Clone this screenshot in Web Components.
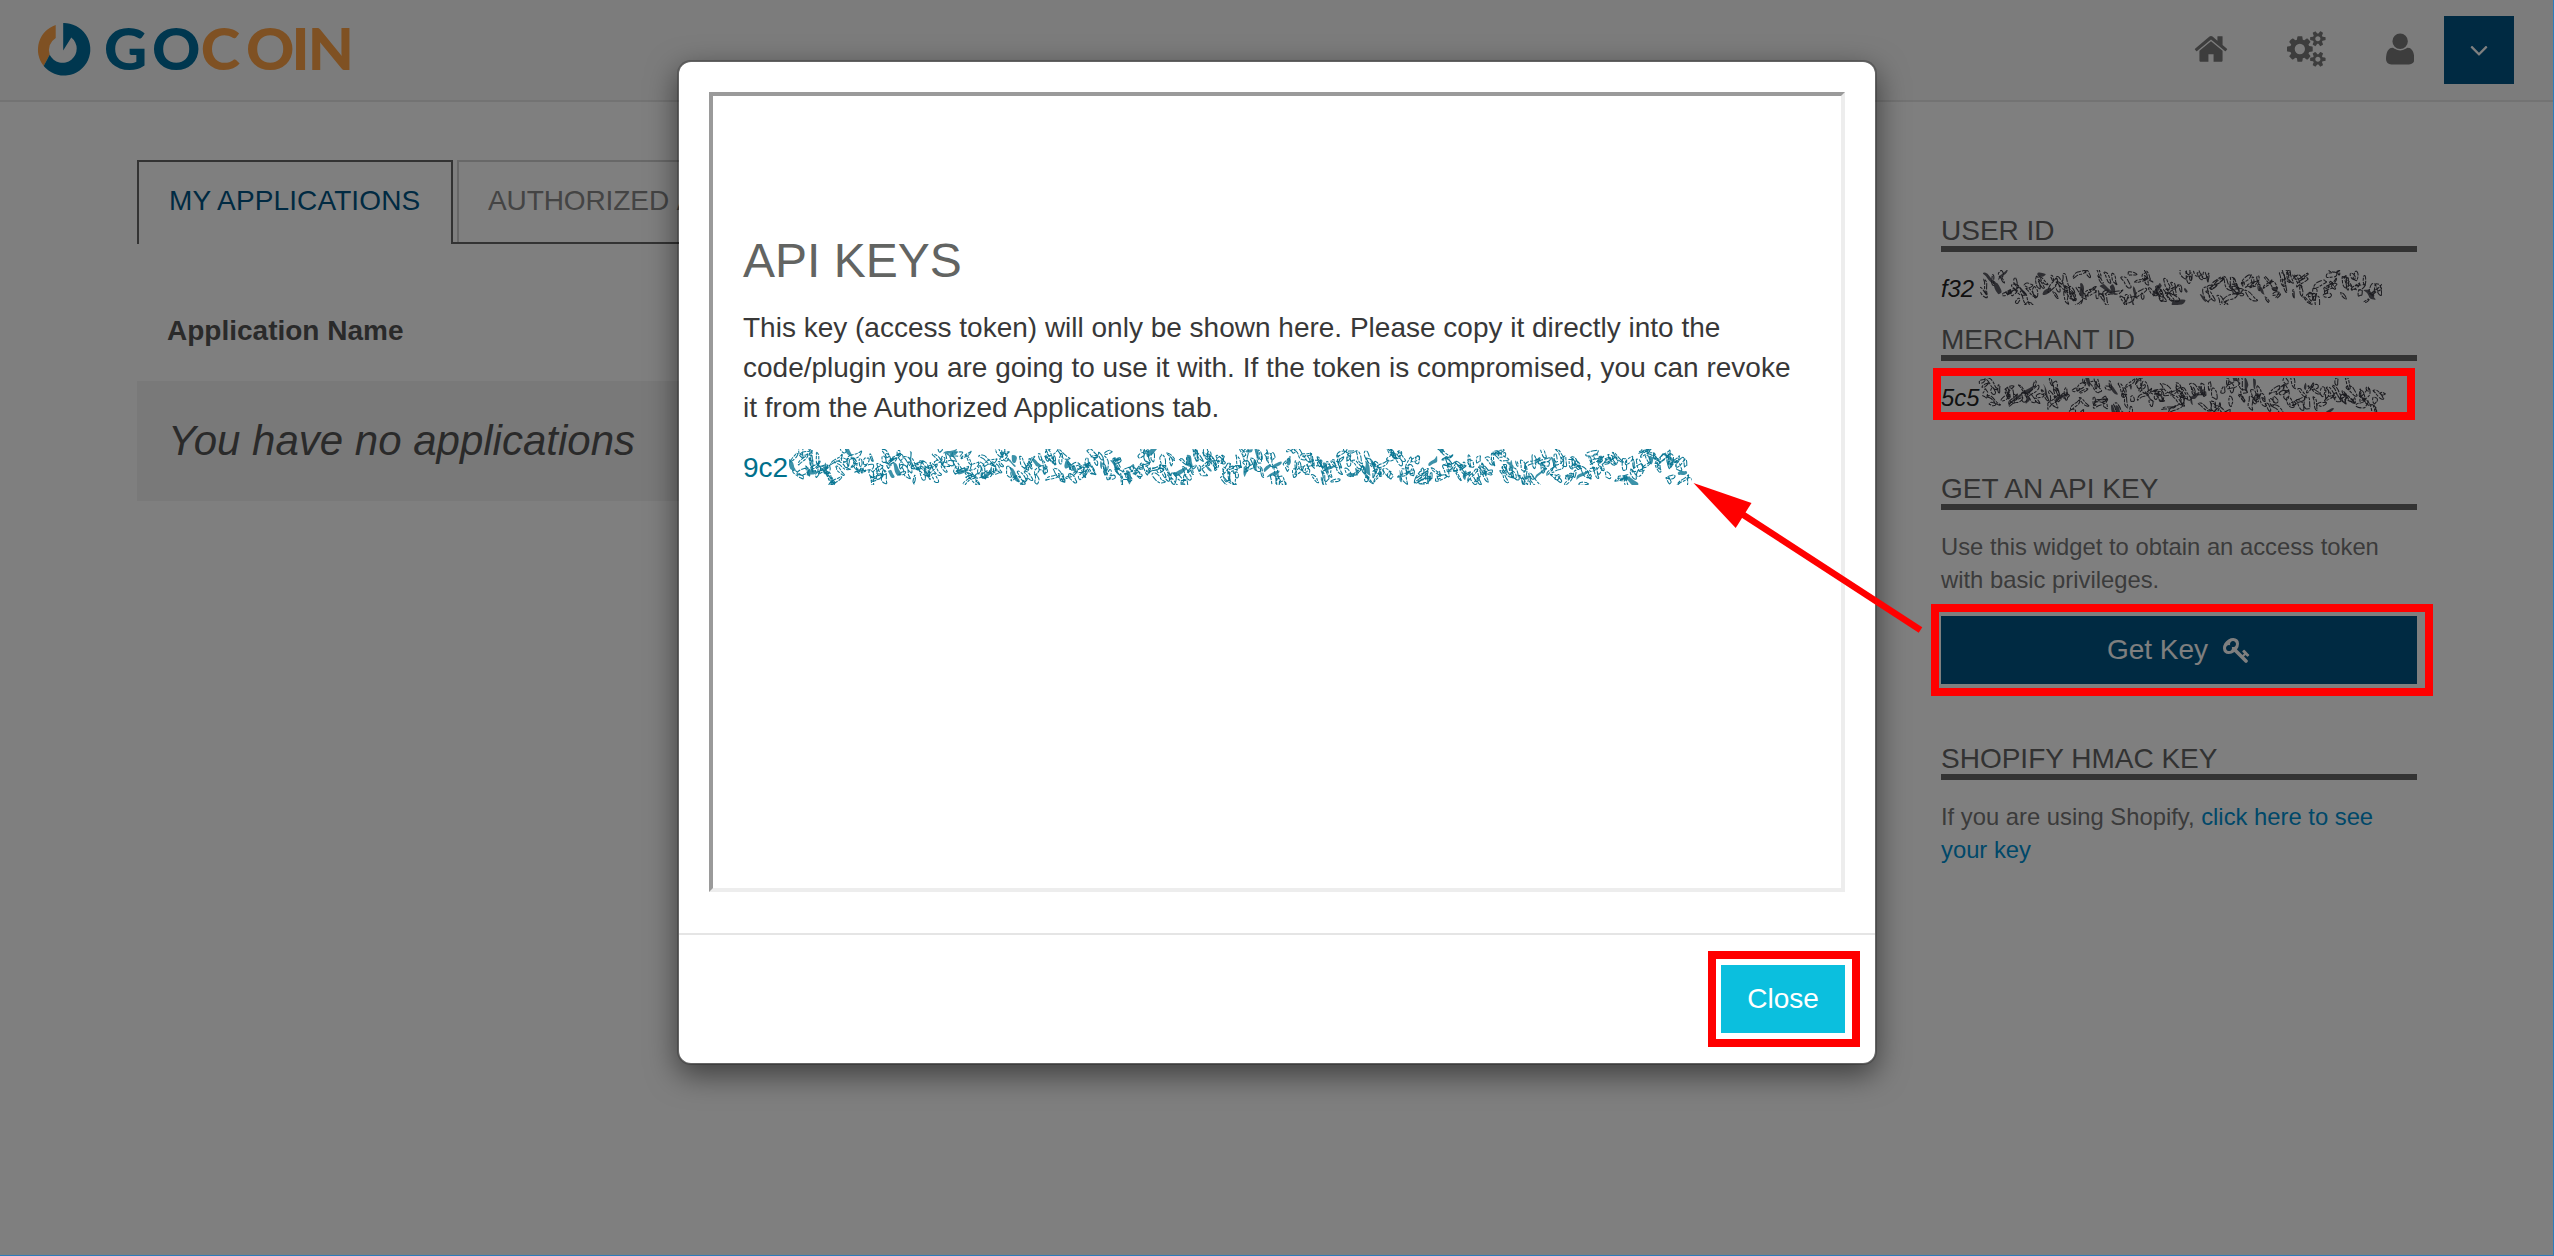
<!DOCTYPE html>
<html lang="en">
<head>
<meta charset="utf-8">
<title>GoCoin – API keys</title>
<style>
html,body{margin:0;height:100%;overflow:hidden;background:#fff;font-family:"Liberation Sans",Arial,sans-serif;font-size:28px;color:#555}
</style>
</head>
<body>
<gc-app></gc-app>
<script>
const define = (name, html, setup) => customElements.define(name, class extends HTMLElement {
  constructor() {
    super();
    this.attachShadow({mode: 'open'}).innerHTML = html;
  }
  connectedCallback() { if (setup) setup.call(this, this.shadowRoot); }
});

const ICONS = {
  home: ['0 0 1792 1792', 'M1472 992v480q0 26-19 45t-45 19h-384v-384h-256v384h-384q-26 0-45-19t-19-45v-480q0-1 .5-3t.5-3l575-474 575 474q1 2 1 6zm223-69l-62 74q-8 9-21 11h-3q-13 0-21-7l-692-577-692 577q-12 8-24 7-13-2-21-11l-62-74q-8-10-7-23.5t11-21.5l719-599q32-26 76-26t76 26l244 204v-195q0-14 9-23t23-9h192q14 0 23 9t9 23v408l219 182q10 8 11 21.5t-7 23.5z'],
  cogs: ['-64 0 1920 1792', 'M832 896q0-106-75-181t-181-75-181 75-75 181 75 181 181 75 181-75 75-181zm768 512q0-52-38-90t-90-38-90 38-38 90q0 53 37.5 90.5t90.5 37.5 90.5-37.5 37.5-90.5zm0-1024q0-52-38-90t-90-38-90 38-38 90q0 53 37.5 90.5t90.5 37.5 90.5-37.5 37.5-90.5zm-384 421v185q0 10-7 19.5t-16 10.5l-155 24q-11 35-32 76 34 48 90 115 7 11 7 20 0 12-7 19-23 30-82.5 89.5t-78.5 59.5q-11 0-21-7l-115-90q-37 19-77 31-11 108-23 155-7 24-30 24h-186q-11 0-20-7.5t-10-17.5l-23-153q-34-10-75-31l-118 89q-7 7-20 7-11 0-21-8-144-133-144-160 0-9 7-19 10-14 41-53t47-61q-23-44-35-82l-152-24q-10-1-17-9.5t-7-19.5v-185q0-10 7-19.5t16-10.5l155-24q11-35 32-76-34-48-90-115-7-11-7-20 0-12 7-20 22-30 82-89t79-59q11 0 21 7l115 90q34-18 77-32 11-108 23-154 7-24 30-24h186q11 0 20 7.5t10 17.5l23 153q34 10 75 31l118-89q8-7 20-7 11 0 21 8 144 133 144 160 0 8-7 19-12 16-42 54t-45 60q23 48 34 82l152 23q10 2 17 10.5t7 19.5zm640 533v140q0 16-149 31-12 27-30 52 51 113 51 138 0 4-4 7-122 71-124 71-8 0-46-47t-52-68q-20 2-30 2t-30-2q-14 21-52 68t-46 47q-2 0-124-71-4-3-4-7 0-25 51-138-18-25-30-52-149-15-149-31v-140q0-16 149-31 13-29 30-52-51-113-51-138 0-4 4-7 4-2 35-20t59-34 30-16q8 0 46 46.5t52 67.5q20-2 30-2t30 2q51-71 92-112l6-2q4 0 124 70 4 3 4 7 0 25-51 138 17 23 30 52 149 15 149 31zm0-1024v140q0 16-149 31-12 27-30 52 51 113 51 138 0 4-4 7-122 71-124 71-8 0-46-47t-52-68q-20 2-30 2t-30-2q-14 21-52 68t-46 47q-2 0-124-71-4-3-4-7 0-25 51-138-18-25-30-52-149-15-149-31v-140q0-16 149-31 13-29 30-52-51-113-51-138 0-4 4-7 4-2 35-20t59-34 30-16q8 0 46 46.5t52 67.5q20-2 30-2t30 2q51-71 92-112l6-2q4 0 124 70 4 3 4 7 0 25-51 138 17 23 30 52 149 15 149 31z'],
  user: ['192 0 1408 1792', 'M1600 1405q0 120-73 189.5t-194 69.5h-874q-121 0-194-69.5t-73-189.5q0-53 3.5-103.5t14-109 26.5-108.5 43-97.5 62-81 85.5-53.5 111.5-20q9 0 42 21.5t74.5 48 108 48 133.5 21.5 133.5-21.5 108-48 74.5-48 42-21.5q61 0 111.5 20t85.5 53.5 62 81 43 97.5 26.5 108.5 14 109 3.5 103.5zm-320-893q0 159-112.5 271.5t-271.5 112.5-271.5-112.5-112.5-271.5 112.5-271.5 271.5-112.5 271.5 112.5 112.5 271.5z'],
  down: ['0 0 1792 1792', 'M1395 736q0 13-10 23l-466 466q-10 10-23 10t-23-10l-466-466q-10-10-10-23t10-23l50-50q10-10 23-10t23 10l393 393 393-393q10-10 23-10t23 10l50 50q10 10 10 23z'],
  key: ['0 0 1792 1792', 'M832 512q0-80-56-136t-136-56-136 56-56 136q0 42 19 83-41-19-83-19-80 0-136 56t-56 136 56 136 136 56 136-56 56-136q0-42-19-83 41 19 83 19 80 0 136-56t56-136zm851 704q0 17-49 66t-66 49q-9 0-28.5-16t-36.5-33-38.5-40-24.5-26l-96 96 220 220q28 28 28 68 0 42-39 81t-81 39q-40 0-68-28l-671-671q-176 131-365 131-163 0-265.5-102.5t-102.5-265.5q0-160 95-313t248-248 313-95q163 0 265.5 102.5t102.5 265.5q0 189-131 365l355 355 96-96q-3-3-26-24.5t-40-38.5-33-36.5-16-28.5q0-17 49-66t66-49q13 0 23 10 6 6 46 44.5t82 79.5 86.5 86 73 78 28.5 41z']
};

define('gc-icon', `<style>:host{display:block;height:36px}svg{display:block;height:100%;fill:currentColor}</style><svg><path/></svg>`, function (root) {
  const [box, d] = ICONS[this.getAttribute('name')];
  root.querySelector('svg').setAttribute('viewBox', box);
  root.querySelector('path').setAttribute('d', d);
});

define('gc-logo', `<style>:host{display:block;width:360px;height:100px}svg{display:block}text{font:900 58px Lato,sans-serif}</style>
<svg width="360" height="100" viewBox="0 0 360 100">
<path fill="#fea246" d="M55.7 25A26 26 0 0 0 43.7 66L49.7 54.8A14.2 14.2 0 0 1 55.7 38Z"/>
<path fill="#006e9e" d="M63.2 23A26.3 26.3 0 1 1 43.7 66L49.7 54.8A14.2 14.2 0 1 0 71.3 37.5L63.2 50.5Z"/>
<text fill="#006e9e" transform="scale(1.03 1)" x="101 147.7" y="70">GO</text>
<text fill="#fea246" transform="scale(1.03 1)" x="195 238.8 283 298.7" y="70">COIN</text>
</svg>`);

define('gc-header', `<style>
:host{display:flex;height:100px;background:#f8f8f8;border-bottom:2px solid #e7e7e7;align-items:flex-start;justify-content:space-between}
nav{display:flex;align-items:center;padding-right:40px;height:100px;color:#7a7a7a}
gc-icon{margin-top:-2px}
.home{margin-right:58.6px}.cogs{margin-right:60px}.user{margin-right:29.7px}
button{display:flex;align-items:center;justify-content:center;width:70px;height:68px;border:0;padding:0;background:#005484;color:#fff}
button gc-icon{height:30px;margin:-1px 0 0}
</style>
<gc-logo></gc-logo>
<nav><gc-icon class="home" name="home"></gc-icon><gc-icon class="cogs" name="cogs"></gc-icon><gc-icon class="user" name="user"></gc-icon><button><gc-icon name="down"></gc-icon></button></nav>`);

define('gc-tab', `<style>
:host{display:flex;align-items:center;box-sizing:border-box;height:82px;line-height:76px;padding:0 30px 2px 29px;border:2px solid #d0d0d0;border-bottom:0;color:#888;white-space:nowrap;letter-spacing:-.1px;word-spacing:1.5px}
:host([active]){height:84px;width:316px;padding:0 28px 4px 30px;border-color:#666;background:#fff;color:#005484;letter-spacing:.12px;word-spacing:0}
</style><slot></slot>`);

define('gc-apps', `<style>
:host{display:block;width:1720px}
.tabs{display:flex;gap:4px;height:82px;border-bottom:2px solid #666}
.head{margin-top:36px;height:101px;line-height:101px;padding-left:30px;font-weight:bold;color:#555}
.row{height:120px;line-height:119px;padding-left:31px;background:#f2f2f2;font-size:42px;font-style:italic;color:#555}
</style>
<div class="tabs"><gc-tab active>MY APPLICATIONS</gc-tab><gc-tab>AUTHORIZED APPLICATIONS</gc-tab></div>
<div class="head">Application Name</div>
<div class="row">You have no applications</div>`);

define('gc-section', `<style>
:host{display:block;font-size:23.8px;line-height:33px;color:#777}
h4{margin:0 0 20px;padding-top:1px;font-size:28px;line-height:31px;font-weight:normal;color:#646464;border-bottom:6px solid #666}
</style><h4></h4><slot></slot>`, function (root) {
  root.querySelector('h4').textContent = this.getAttribute('heading');
});

define('gc-sidebar', `<style>
:host{display:flex;flex-direction:column;width:476px;gap:58px;padding-top:54px}
.ids{display:flex;flex-direction:column;gap:18px}
em{color:#222}
a{color:#0090d2}
button{display:flex;width:100%;height:68px;margin-top:20px;border:0;background:#005484;color:#fff;font:28px "Liberation Sans",sans-serif;align-items:center;justify-content:center;gap:15px}
gc-icon{height:28px}
</style>
<div class="ids">
<gc-section heading="USER ID"><em>f32</em></gc-section>
<gc-section heading="MERCHANT ID"><em>5c5</em></gc-section>
</div>
<gc-section heading="GET AN API KEY">Use this widget to obtain an access token with basic privileges.<button>Get Key <gc-icon name="key"></gc-icon></button></gc-section>
<gc-section heading="SHOPIFY HMAC KEY">If you are using Shopify, <a>click here to see your key</a></gc-section>`);

define('gc-modal', `<style>
:host{position:absolute;inset:0;display:flex;justify-content:center;align-items:flex-start;padding-top:60px;background:rgba(0,0,0,.5)}
.dialog{display:flex;flex-direction:column;width:1196px;height:1001px;border:2px solid rgba(0,0,0,.2);border-radius:14px;background:#fff;background-clip:padding-box;box-shadow:0 10px 30px rgba(0,0,0,.5)}
.frame{box-sizing:border-box;height:800px;margin:30px 30px 41px;border:4px solid;border-color:#9a9a9a #ededed #ededed #9a9a9a;padding:132px 30px 0}
h1{margin:0 0 15px;font-size:48px;line-height:65px;font-weight:normal;color:#626462}
p{margin:0 0 20px;line-height:40px;color:#383838}
.key{color:#00708c}
footer{display:flex;justify-content:flex-end;padding:30px;border-top:2px solid #e5e5e5}
button{width:124px;height:68px;border:0;padding:0;background:#0bbfde;color:#fff;font:28px "Liberation Sans",sans-serif}
</style>
<div class="dialog">
<div class="frame"><h1>API KEYS</h1>
<p>This key (access token) will only be shown here. Please copy it directly into the code/plugin you are going to use it with. If the token is compromised, you can revoke it from the Authorized Applications tab.</p>
<p class="key">9c2</p></div>
<footer><button>Close</button></footer>
</div>`);

/* Scrambled contours that hide the rest of each secret, plus the red callouts. */
define('gc-markup', `<style>:host{position:absolute;inset:0;pointer-events:none}svg{display:block}</style>
<svg width="2554" height="1256" viewBox="0 0 2554 1256" fill="none">
<defs><clipPath id="a"><path d="M1980 270H2382V305H1980Z"/></clipPath><clipPath id="b"><path d="M1978 378H2394V412H1978Z"/></clipPath><clipPath id="c"><path d="M789 449H1692V485H789Z"/></clipPath></defs>
<g id="noise"></g>
<g stroke="#f00" stroke-width="8"><path d="M1937 372H2411V416H1937ZM1935 608H2429V692H1935ZM1712 955H1856V1043H1712Z"/></g>
<path d="M1742 514L1920.5 630" stroke="#f00" stroke-width="6.5"/>
<path fill="#f00" d="M1693.5 483L1751.5 503L1735.7 528Z"/>
<path d="M2553.5 0V1255.5H0" stroke="#2a7dbd"/>
</svg>`, function (root) {
  let seed = 7;
  const rnd = () => (seed = (seed * 16807) % 2147483647) / 2147483647;
  const band = (clip, x0, x1, y0, y1, color, step) => {
    let out = '', dots = '';
    for (let x = x0 + 5; x < x1 - 6; x += step) {
      const slant = (((x - x0) % 50) / 50 - .5) * 14;
      const cx = x + rnd() * 7 - 2, cy = (y0 + y1) / 2 + slant + (rnd() - .5) * (y1 - y0) * .72;
      const angle = (rnd() < .7 ? .35 + rnd() * .95 : -.4 - rnd() * .9);
      const len = 2.5 + rnd() * 6, wid = .9 + rnd() * 2.1, n = 9, pts = [];
      for (let i = 0; i < n; i++) {
        const t = i / n * 6.283, r = .65 + rnd() * .7;
        const u = Math.cos(t) * len * r, v = Math.sin(t) * wid * r + Math.sin(u / 3) * 1.6;
        pts.push([cx + u * Math.cos(angle) - v * Math.sin(angle), cy + u * Math.sin(angle) + v * Math.cos(angle)]);
      }
      const mid = (p, q) => ((p[0] + q[0]) / 2).toFixed(1) + ' ' + ((p[1] + q[1]) / 2).toFixed(1);
      let d = 'M' + mid(pts[n - 1], pts[0]);
      for (let i = 0; i < n; i++) d += 'Q' + pts[i][0].toFixed(1) + ' ' + pts[i][1].toFixed(1) + ' ' + mid(pts[i], pts[(i + 1) % n]);
      if (rnd() < .12) dots += d + 'Z'; else out += d + (rnd() < .75 ? 'Z' : '');
    }
    return `<g clip-path="url(#${clip})"><path d="${out}" stroke="${color}" stroke-width="1.05" stroke-dasharray="6 1.2 3 1"/><path d="${dots}" fill="${color}" opacity=".8"/></g>`;
  };
  root.getElementById('noise').innerHTML =
    band('a', 1980, 2384, 270, 305, '#1c1c20', 2.4) +
    band('b', 1977, 2386, 378, 412, '#1c1c20', 2.3) +
    band('c', 787, 1692, 449, 485, '#0b7794', 1.8);
});

define('gc-app', `<style>
:host{display:block;position:relative;width:2554px;height:1256px;overflow:hidden;background:#fff}
main{display:flex;justify-content:space-between;padding:58px 137px 0}
</style>
<gc-header></gc-header>
<main><gc-apps></gc-apps><gc-sidebar></gc-sidebar></main>
<gc-modal></gc-modal>
<gc-markup></gc-markup>`);
</script>
</body>
</html>
